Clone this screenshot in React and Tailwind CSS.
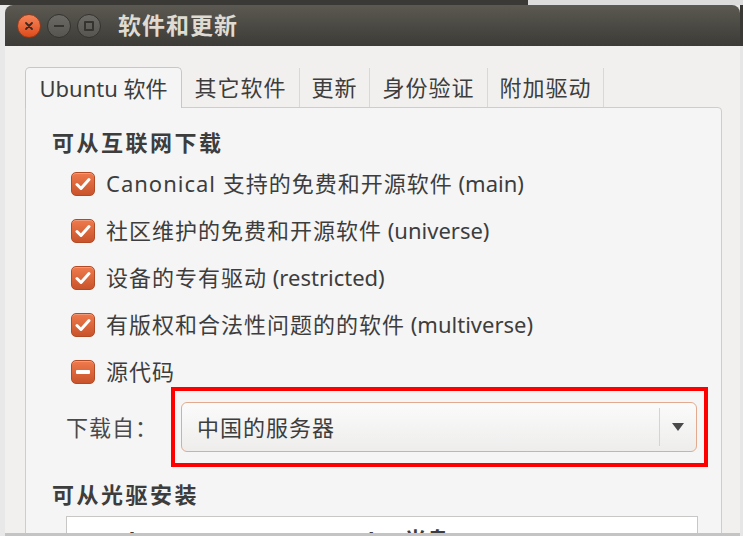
import React from 'react';

const font = { fontFamily: '"Noto Sans", "Noto Sans CJK SC", sans-serif' };

function CheckBox({ mixed }) {
  return (
    <div className="w-[24px] h-[24px] rounded-[5px] border border-[#b34a26] bg-gradient-to-b from-[#ef7a4c] to-[#c9542c] flex items-center justify-center shrink-0 shadow-[inset_0_1px_0_rgba(255,255,255,0.25)]">
      {mixed ? (
        <div className="w-[14px] h-[4px] rounded-[1px] bg-white" />
      ) : (
        <svg width="16" height="14" viewBox="0 0 16 14">
          <path d="M2 7.5 L6 11.5 L14 2.5" fill="none" stroke="#fff" strokeWidth="3" strokeLinecap="round" strokeLinejoin="round" />
        </svg>
      )}
    </div>
  );
}

function Row({ zh, en, mixed }) {
  return (
    <div className="h-[47px] flex items-center pl-[45px]">
      <CheckBox mixed={mixed} />
      <span className="ml-[11px] text-[22px] tracking-[1px] text-[#3d3d3d] whitespace-nowrap">
        {zh}
        {en && <span className="tracking-normal"> {en}</span>}
      </span>
    </div>
  );
}

export default function App() {
  const tabs = [
    { label: '其它软件', w: 'w-[118px]' },
    { label: '更新', w: 'w-[70px]' },
    { label: '身份验证', w: 'w-[118px]' },
    { label: '附加驱动', w: 'w-[116px]' },
  ];

  return (
    <div className="w-[743px] h-[536px] overflow-hidden bg-[#e6e6e6] flex flex-col" style={font}>
      <div className="h-[5px] flex shrink-0">
        <div className="w-[528px] bg-[#3a3935]" />
        <div className="flex-1 bg-[#dcdcdc]" />
      </div>
      <div className="flex flex-1 min-h-0">
        <div className="w-[5px] bg-[#e8e8e8]" />
        <div className="w-[735px] flex flex-col border-b-[3px] border-[#c4c4c4] min-h-0">
          <div className="h-[41px] shrink-0 rounded-t-[8px] bg-gradient-to-b from-[#5b5951] to-[#3c3b37] flex items-center pl-[12px]">
            <div className="w-[24px] h-[24px] rounded-full bg-gradient-to-b from-[#f58457] to-[#de4a17] border border-[#8e3a1c] flex items-center justify-center">
              <svg width="10" height="10" viewBox="0 0 10 10">
                <path d="M2 2 L8 8 M8 2 L2 8" stroke="#3b2a23" strokeWidth="1.8" strokeLinecap="round" />
              </svg>
            </div>
            <div className="ml-[6px] w-[24px] h-[24px] rounded-full bg-gradient-to-b from-[#6c6a64] to-[#57554f] border border-[#34332f] flex items-center justify-center">
              <div className="w-[10px] h-[2px] bg-[#35342f]" />
            </div>
            <div className="ml-[6px] w-[24px] h-[24px] rounded-full bg-gradient-to-b from-[#6c6a64] to-[#57554f] border border-[#34332f] flex items-center justify-center">
              <div className="w-[10px] h-[10px] border-2 border-[#35342f] rounded-[1px]" />
            </div>
            <span className="ml-[17px] text-[23px] font-bold tracking-[1px] text-[#dfdbd2]">软件和更新</span>
          </div>
          <div className="flex-1 min-h-0 bg-[#f1f0ef] pl-[20px] pt-[21px] flex flex-col overflow-hidden">
            <div className="h-[40px] flex items-stretch shrink-0">
              <div className="w-[157px] rounded-t-[5px] border border-b-0 border-[#c9c7c5] bg-[#f5f5f5] flex items-center justify-center text-[22px] text-[#3d3d3d] relative z-10 -mb-[1px]">
                Ubuntu 软件
              </div>
              {tabs.map((t) => (
                <div
                  key={t.label}
                  className={`${t.w} mt-[1px] border-r border-[#dad8d6] flex items-center justify-center text-[22px] tracking-[1px] text-[#3d3d3d]`}
                >
                  {t.label}
                </div>
              ))}
            </div>
            <div className="w-[697px] flex-1 border border-[#cfcdcb] bg-[#f5f5f5] rounded-tr-[4px] flex flex-col">
              <div className="h-[30px] mt-[19px] pl-[26px] flex items-center text-[22px] font-bold tracking-[2.5px] text-[#3d3d3d]">
                可从互联网下载
              </div>
              <div className="mt-[3px]">
                <Row zh="Canonical 支持的免费和开源软件" en="(main)" />
                <Row zh="社区维护的免费和开源软件" en="(universe)" />
                <Row zh="设备的专有驱动" en="(restricted)" />
                <Row zh="有版权和合法性问题的的软件" en="(multiverse)" />
                <Row zh="源代码" mixed />
              </div>
              <div className="mt-[7px] h-[50px] pl-[40px] flex items-center">
                <span className="w-[115px] text-[22px] tracking-[1px] text-[#4a4a4a]">下载自：</span>
                <div className="relative w-[516px] h-[50px]">
                  <div className="w-full h-full rounded-[6px] border border-[#e2ab90] bg-gradient-to-b from-[#fbfbfb] to-[#eeedec] flex items-center">
                    <span className="flex-1 pl-[15px] text-[22px] tracking-[1px] text-[#3d3d3d]">中国的服务器</span>
                    <div className="w-px h-[38px] bg-[#d6d4d2]" />
                    <div className="w-[36px] flex items-center justify-center">
                      <svg width="12" height="8" viewBox="0 0 12 8">
                        <path d="M0 0 H12 L6 8 Z" fill="#4a4a4a" />
                      </svg>
                    </div>
                  </div>
                  <div className="absolute -left-[10px] -right-[11px] -top-[15px] -bottom-[15px] border-[4px] border-[#ff0000] pointer-events-none" />
                </div>
              </div>
              <div className="h-[30px] mt-[27px] pl-[26px] flex items-center text-[22px] font-bold tracking-[2.5px] text-[#3d3d3d]">
                可从光驱安装
              </div>
              <div className="mt-[7px] ml-[40px] w-[632px] flex-1 bg-white border border-[#c9c7c5] pl-[45px] pt-[6px]">
                <span className="text-[22px] font-bold text-[#3d3d3d] whitespace-nowrap">Ubuntu 14.04 'Trusty Tahr' 光盘</span>
              </div>
            </div>
          </div>
        </div>
        <div className="w-[3px] flex flex-col">
          <div className="h-[41px] bg-[#3a3935]" />
          <div className="flex-1 bg-[#e6e6e6]" />
        </div>
      </div>
    </div>
  );
}
